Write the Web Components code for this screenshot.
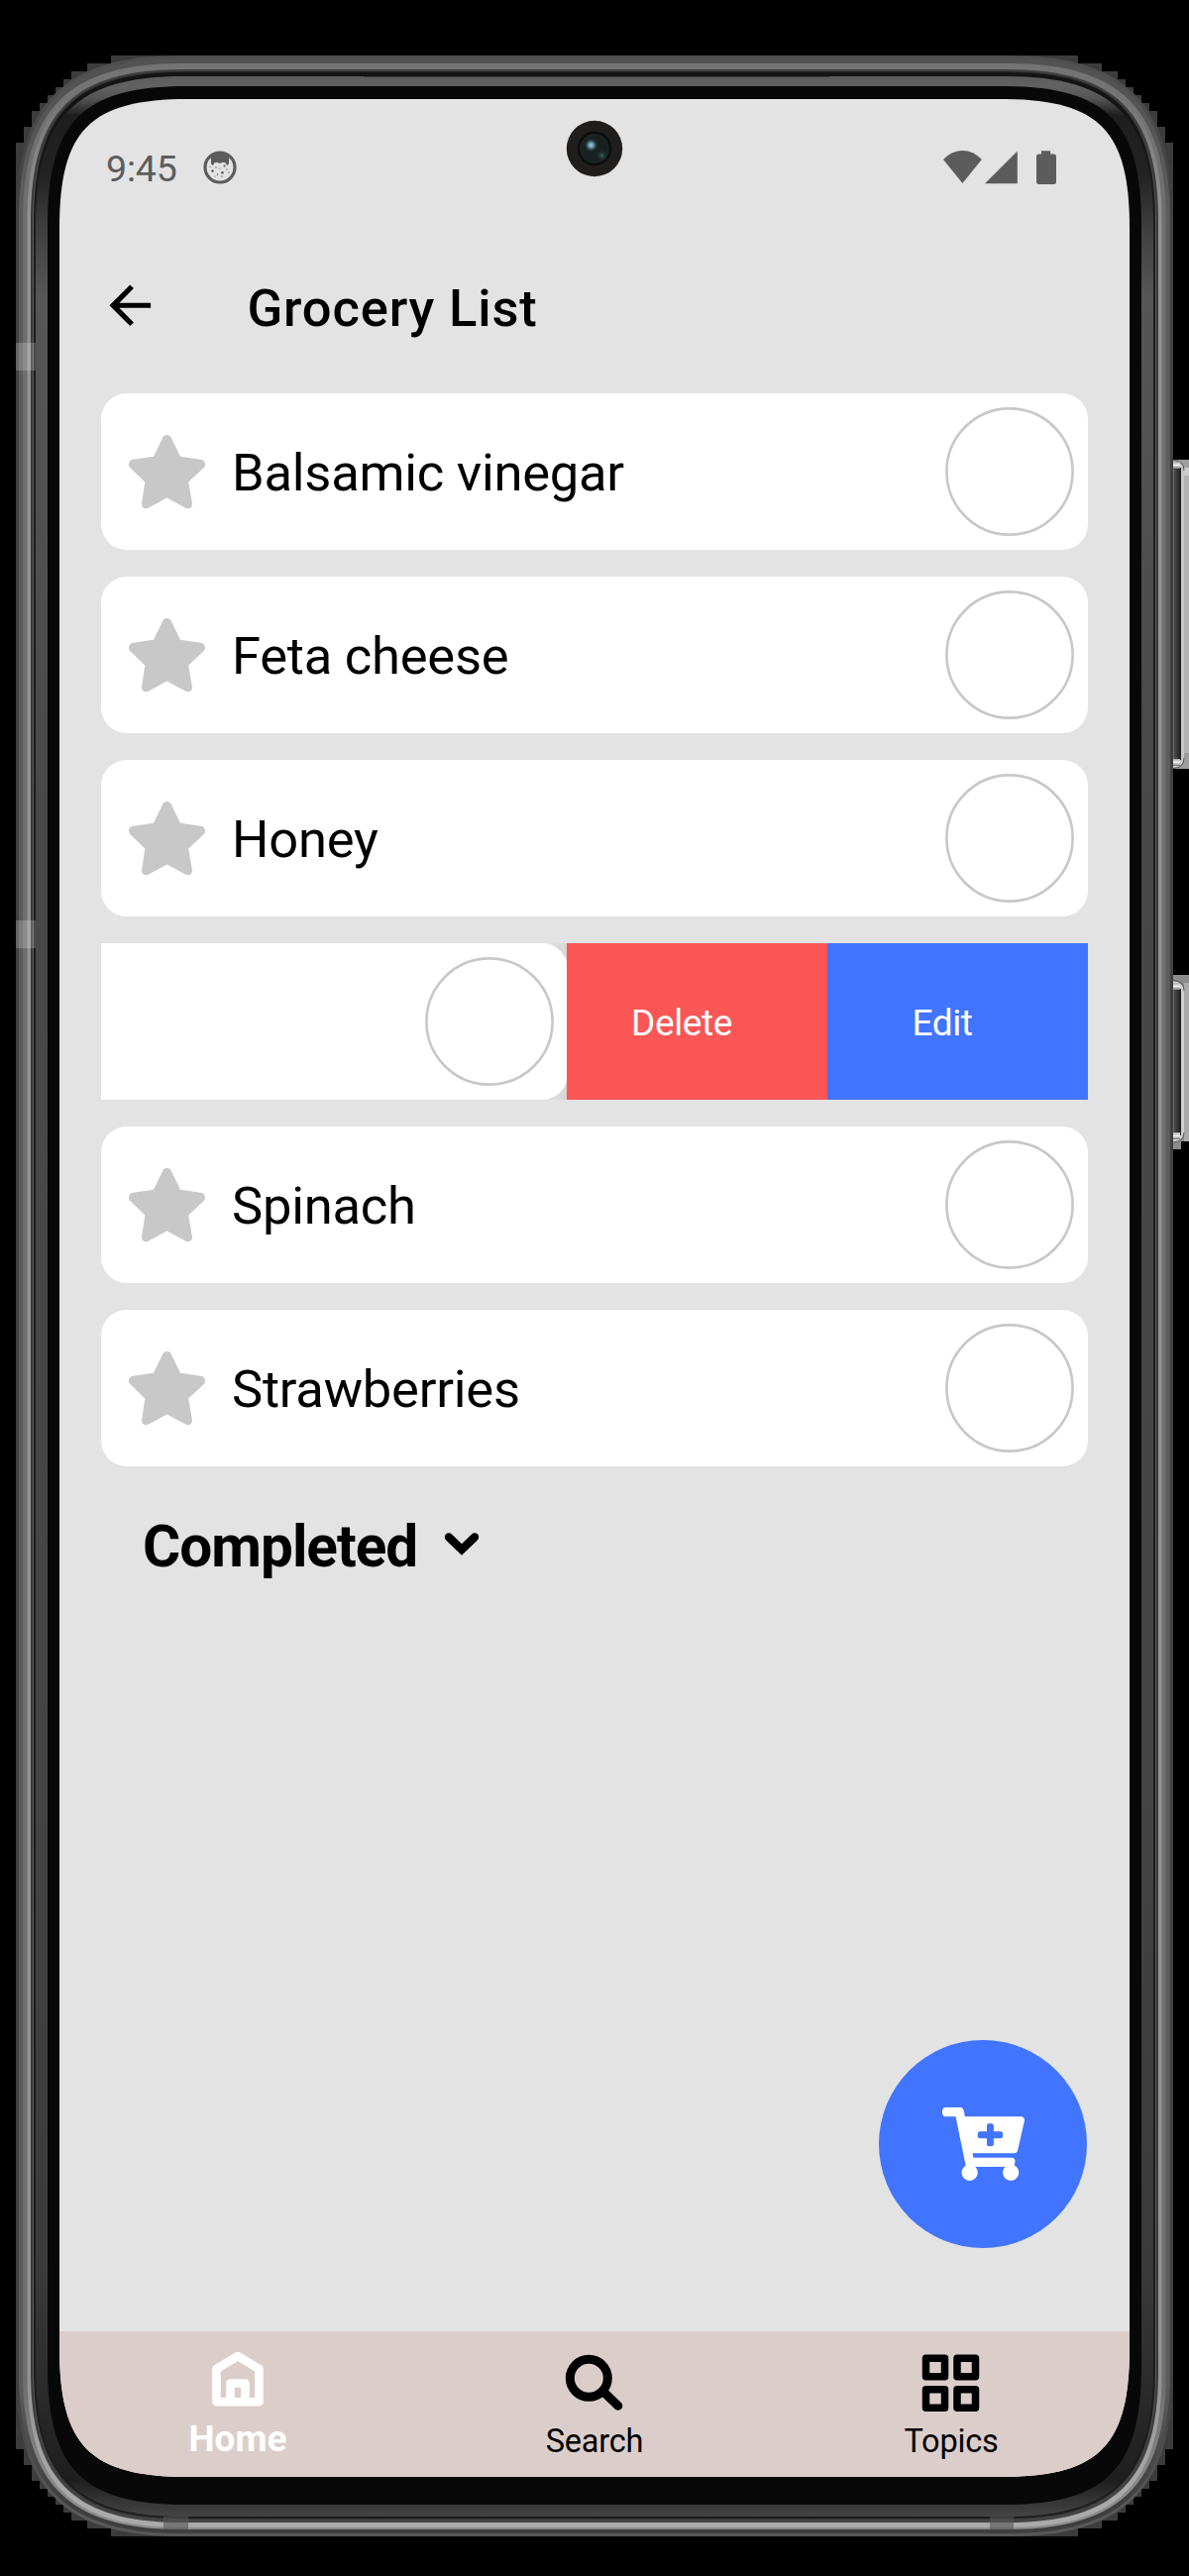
<!DOCTYPE html>
<html lang="en">
<head>
<meta charset="utf-8">
<title>Grocery List</title>
<style>
  html, body { margin: 0; background: #000; }
  body { width: 1200px; height: 2600px; overflow: hidden; font-family: Roboto, "Liberation Sans", sans-serif; color: #000; }
</style>
</head>
<body>
<phone-frame>
  <status-bar time="9:45"></status-bar>
  <app-header>Grocery List</app-header>
  <grocery-list>
    <grocery-item>Balsamic vinegar</grocery-item>
    <grocery-item>Feta cheese</grocery-item>
    <grocery-item>Honey</grocery-item>
    <swiped-item></swiped-item>
    <grocery-item>Spinach</grocery-item>
    <grocery-item>Strawberries</grocery-item>
  </grocery-list>
  <completed-toggle>Completed</completed-toggle>
  <add-button></add-button>
  <tab-bar>
    <tab-item active>
      <svg slot="icon" width="60" height="62" viewBox="0 0 60 62"><path d="M8.500 22 L30 9 L51.500 22 V55.300 H8.500 Z" fill="none" stroke="#fff" stroke-width="8.600" stroke-linejoin="round"/><path d="M22.500 54 V36.500 H37.500 V54" fill="none" stroke="#fff" stroke-width="8.600" stroke-linejoin="round"/></svg>
      Home</tab-item>
    <tab-item>
      <svg slot="icon" width="60" height="66" viewBox="0 -2 60 66"><circle cx="24.300" cy="29.300" r="19" fill="none" stroke="#000" stroke-width="9"/><path d="M38.500 42.500 L53.800 57.200" stroke="#000" stroke-width="9" stroke-linecap="round"/></svg>
      Search</tab-item>
    <tab-item>
      <svg slot="icon" width="60" height="66" viewBox="0 0 60 66"><g fill="none" stroke="#000" stroke-width="7.500" stroke-linejoin="round"><rect x="4.500" y="11.300" width="19" height="18.500"/><rect x="36" y="11.300" width="18.500" height="18.500"/><rect x="4.500" y="42.800" width="19" height="18.500"/><rect x="36" y="42.800" width="18.500" height="18.500"/></g></svg>
      Topics</tab-item>
  </tab-bar>
</phone-frame>

<script>
// Rounded outline with smoothed corners: R is the corner extent, a the control pull.
const outline = (l, t, r, b, R, a) =>
  `M${l} ${t + R}C${l} ${t + a} ${l + a} ${t} ${l + R} ${t}H${r - R}C${r - a} ${t} ${r} ${t + a} ${r} ${t + R}` +
  `V${b - R}C${r} ${b - a} ${r - a} ${b} ${r - R} ${b}H${l + R}C${l + a} ${b} ${l} ${b - a} ${l} ${b - R}Z`;

const SCREEN = outline(0, 0, 1080, 2400, 130, 31);

function frameArt() {
  // [left, top, bottom, side colour, top colour, bottom colour]
  const layers = [
    [16, 56, 2560, '#404040', '#4e4e4e', '#585858'],
    [19, 59, 2557, '#5c5c5c', '#535353', '#3e3e3e'],
    [23, 64, 2553, '#6e6e6e', '#747474', '#8c8c8c'],
    [27.500, 66, 2551, '#929292', '#747474', '#aaaaaa'],
    [31, 70, 2546, '#3a3a3a', '#404040', '#444444'],
    [33, 72, 2543, '#5a5a5a', '#2a2a2a', '#383838'],
    [34, 73, 2542, '#1c1c1c', '#141414', '#1c1c1c'],
    [36, 77, 2540, null],
    [48, 87, 2528, '#080808', '#080808', '#080808'],
  ];
  let defs = '', body = '';
  layers.forEach(([x, t, b, side, top, bot], i) => {
    const k = (x - 16) / 44, R = 165 - 35 * k, a = 49 - 18 * k;
    const stops = side
      ? [[0, top], [.012, top], [.06, side], [.94, side], [.988, bot], [1, bot]]
      : [[0, '#5c5c5c'], [.004, '#626262'], [.009, '#555'], [.016, '#1e1e1e'], [.04, '#222'], [.062, '#3e3e3e'], [.09, '#565656'],
         [.3, '#484848'], [.7, '#444'], [.9, '#3a3a3a'], [.95, '#2a2a2a'], [.985, '#1e1e1e'], [.994, '#363636'], [1, '#444']];
    defs += `<linearGradient id="g${i}" gradientUnits="userSpaceOnUse" x1="0" x2="0" y1="${t}" y2="${b}">` +
      stops.map(([o, c]) => `<stop offset="${o}" stop-color="${c}"/>`).join('') + '</linearGradient>';
    body += `<path d="${outline(x, t, 1200 - x, b, R, a)}" fill="url(#g${i})"/>`;
  });
  // Stepped silhouette behind the metal rim.
  const steps = [[16, 144], [24, 128], [32, 112], [40, 104], [48, 96], [56, 88], [64, 80], [72, 72], [88, 64], [112, 56]];
  const rects = steps.map(([x, y]) => `<rect x="${x}" y="${y}" width="${1200 - 2 * x}" height="${2616 - 2 * y}"/>`).join('');
  return `<svg width="1200" height="2600" viewBox="0 0 1200 2600"><defs>${defs}
    <linearGradient id="btn"><stop offset="0" stop-color="#8a8a8a"/><stop offset=".12" stop-color="#4c4c4c"/><stop offset=".6" stop-color="#333"/><stop offset="1" stop-color="#1c1c1c"/></linearGradient>
    <linearGradient id="cap" x1="0" x2="0" y1="0" y2="1"><stop offset="0" stop-color="#aaa"/><stop offset=".5" stop-color="#eee"/><stop offset="1" stop-color="#777"/></linearGradient></defs>
    <g fill="#3c3c3c" shape-rendering="crispEdges">${rects}</g>${body}
    <g fill="#fff" fill-opacity=".2"><rect x="16" y="346" width="20" height="28"/><rect x="16" y="929" width="20" height="28"/></g>
    <g fill="#555" fill-opacity=".6"><rect x="165" y="2540" width="25" height="13"/><rect x="999" y="2540" width="24" height="13"/></g>
    <path d="M365 75H840L837 77.500H368Z" fill="#141414"/>
    <rect x="1184" y="464" width="16" height="312" fill="#9d9d9d"/><rect x="1195" y="472" width="5" height="8" fill="#ccc"/><rect x="1195" y="480" width="5" height="280" fill="#b2b2b2"/>
    <path d="M1184 465Q1195 465 1195 477V763Q1195 775 1184 775Z" fill="#c8c8c8"/>
    <path d="M1184 464.500Q1195 465 1195 475" fill="none" stroke="#555"/><path d="M1195 765Q1195 775 1184 775.500" fill="none" stroke="#555"/>
    <rect x="1184" y="472" width="8" height="295" fill="url(#btn)"/>
    <rect x="1184" y="466" width="7" height="7" fill="url(#cap)"/><rect x="1184" y="766" width="7" height="7" fill="url(#cap)"/>
    <path d="M1184 984H1200V1152H1192V1160H1184Z" fill="#8c8c8c"/><rect x="1195" y="992" width="5" height="160" fill="#aaa"/>
    <path d="M1184 990Q1195 991 1195 1001V1143Q1195 1152 1184 1153Z" fill="#d0d0d0"/>
    <path d="M1184 989.500Q1195 990 1195 1000" fill="none" stroke="#555"/><path d="M1195 1143Q1195 1152 1184 1153" fill="none" stroke="#555"/>
    <rect x="1184" y="998" width="8" height="148" fill="url(#btn)"/>
    <rect x="1184" y="992" width="7" height="7" fill="url(#cap)"/><rect x="1184" y="1143" width="7" height="7" fill="url(#cap)"/>
  </svg>`;
}

function define(name, html) {
  customElements.define(name, class extends HTMLElement {
    constructor() {
      super();
      this.attachShadow({ mode: 'open' }).innerHTML = typeof html === 'function' ? html(this) : html;
    }
  });
}

define('phone-frame', () => `<style>
  :host { display: block; position: relative; width: 1200px; height: 2600px; box-sizing: border-box; padding: 100px 60px; background: #000; }
  .art { position: absolute; inset: 0; }
  .art svg { display: block; }
  .screen { position: relative; width: 1080px; height: 2400px; display: flex; flex-direction: column; background: #e3e3e3; clip-path: path("${SCREEN}"); }
  .camera { position: absolute; left: 511px; top: 21px; }
</style>
<div class="art">${frameArt()}</div>
<div class="screen"><slot></slot>
<svg class="camera" width="58" height="58" viewBox="-29 -29 58 58">
  <defs><radialGradient id="lens"><stop offset="0" stop-color="#9fd4e8"/><stop offset=".4" stop-color="#5d8c9c"/><stop offset="1" stop-color="#203030" stop-opacity="0"/></radialGradient>
  <radialGradient id="glow"><stop offset="0" stop-color="#3a6a5c"/><stop offset="1" stop-color="#203030" stop-opacity="0"/></radialGradient></defs>
  <circle r="28.200" fill="#201e1d"/><circle r="17.200" fill="#0c0c0c"/><circle r="15" fill="#1b2424"/><circle r="12.500" fill="#182020"/>
  <circle cx="-3.500" cy="-3.500" r="7" fill="url(#lens)"/><ellipse cx="7.500" cy="7" rx="5.500" ry="5.500" fill="url(#glow)"/>
</svg></div>`);

define('status-bar', `<style>
  :host { display: flex; align-items: center; height: 138px; box-sizing: border-box; padding: 0 74px 0 47px; color: #5c5c5c; font-size: 37.500px; flex: none; }
  .time { line-height: 44px; width: 98px; margin-top: 1px; letter-spacing: -.2px; }
  svg { display: block; }
  .right { margin-left: auto; }
</style>
<span class="time">9:45</span>
<svg width="34" height="34" viewBox="0 0 34 34"><circle cx="17" cy="17" r="15" fill="none" stroke="#5c5c5c" stroke-width="3.200"/>
<path d="M7.500 5.500Q17 -1.500 26.500 5.500L26 11Q26.500 14.500 24.500 14.800Q23 14.800 23 12.500L20 11.800Q17 13.500 14 11.800L11 12.500Q11 14.800 9.500 14.800Q7.500 14.500 8 11Z" fill="#5c5c5c"/>
<g fill="#5c5c5c"><circle cx="9.500" cy="20.500" r="1.300"/><circle cx="19.500" cy="22.200" r="1.300"/><circle cx="21.500" cy="15.500" r="1.100"/><circle cx="13" cy="17" r=".7"/><circle cx="17" cy="18" r=".6"/><circle cx="14.500" cy="24" r=".8"/><circle cx="24" cy="19" r=".7"/><circle cx="26" cy="22" r=".7"/><circle cx="19" cy="26" r=".7"/><circle cx="12" cy="26" r=".6"/><circle cx="7" cy="16.500" r=".6"/></g></svg>
<svg class="right" width="114" height="35" viewBox="0 0 114 35" fill="#5c5c5c"><path d="M0 9Q8.500 0 19.400 0T38.800 9L19.400 33Z"/><path d="M42 33.200H74.800V.5Z"/><path d="M99 .2H108.200V3.500H111.500Q114 3.500 114 6V31.500Q114 34 111.500 34H96.500Q94 34 94 31.500V6Q94 3.500 96.500 3.500H99Z"/></svg>`);

define('app-header', `<style>
  :host { display: flex; align-items: center; height: 144px; padding: 0 40px; flex: none; font-size: 52.500px; font-weight: 500; }
  svg { display: block; margin: -3px 87px 0 0; }
  .t { line-height: 62px; margin-top: 2px; letter-spacing: .85px; }
</style>
<svg width="62.500" height="62.500" viewBox="0 0 24 24"><path d="M20 11H7.830l5.590-5.590L12 4l-8 8 8 8 1.410-1.410L7.830 13H20v-2z"/></svg>
<span class="t"><slot></slot></span>`);

define('grocery-list', `<style>
  :host { display: flex; flex-direction: column; gap: 27px; padding: 15px 42px 0; flex: none; }
</style><slot></slot>`);

define('check-ring', `<style>
  :host { display: block; width: 130px; height: 130px; flex: none; }
  svg { display: block; }
</style><svg width="130" height="130" viewBox="0 0 130 130"><circle cx="65" cy="65" r="63.600" fill="none" stroke="#c8c8c8" stroke-width="2.600"/></svg>`);

define('grocery-item', `<style>
  :host { display: flex; align-items: center; height: 158px; box-sizing: border-box; padding: 0 14px 0 28px; background: #fff; border-radius: 26px; font-size: 52.500px; }
  svg { display: block; margin-right: 27px; }
  .name { flex: 1; line-height: 62px; margin-top: 2px; white-space: nowrap; letter-spacing: -.25px; }
</style>
<svg width="77" height="75" viewBox="0 0 77 75"><path fill="#c8c8c8" d="M38.500 0Q41.800 0 43 3.200L52 21.800L72.500 24.800Q77 25.500 77 30Q77 32 75.200 33.600L60.200 47.500L64 69.500Q63.800 74.500 59.200 74.300Q58 74 57 73.500L38.500 63.500L20 73.500Q19 74 17.800 74.300Q13.200 74.500 13 69.500L16.300 47.500L1.800 33.600Q0 32 0 30Q0 25.500 4.500 24.800L25 21.800L34 3.200Q35.200 0 38.500 0Z"/></svg>
<span class="name"><slot></slot></span><check-ring></check-ring>`);

define('swiped-item', `<style>
  :host { display: flex; height: 158px; font-size: 37px; letter-spacing: -.4px; color: #fff; }
  .card { width: 471px; box-sizing: border-box; padding: 14px; display: flex; justify-content: flex-end; background: #fff; border-radius: 0 26px 26px 0; }
  .notch { background: linear-gradient(90deg, #e3e3e3 95%, #d6d6d6); flex: none; width: 471px; margin-right: -1px; }
  .act { flex: 1; display: flex; align-items: center; justify-content: center; padding: 2px 31px 0 0; }
  .del { background: #fa5655; } .edit { background: #4175ff; }
</style>
<div class="notch"><div class="card"><check-ring></check-ring></div></div>
<div class="act del">Delete</div><div class="act edit">Edit</div>`);

define('completed-toggle', `<style>
  :host { display: flex; align-items: center; gap: 26px; flex: none; padding: 46px 84px 0; font-size: 58.500px; font-weight: 700; line-height: 70px; letter-spacing: -1px; }
  svg { display: block; }
</style><span><slot></slot></span>
<svg width="38" height="30" viewBox="0 0 38 30"><path d="M6 5.500L19 18L32 5.500" fill="none" stroke="#000" stroke-width="8.400" stroke-linecap="round"/></svg>`);

define('add-button', `<style>
  :host { display: flex; align-items: center; justify-content: center; width: 210px; height: 210px; flex: none; align-self: flex-end; margin: auto 43px 84px 0; border-radius: 50%; background: #4175ff; }
</style>
<svg width="83" height="74" viewBox="0 0 576 512"><path fill="#fff" d="M504.717 320H211.572l6.545 32h268.418c15.401 0 26.816 14.301 23.403 29.319l-5.517 24.276C523.112 414.668 536 433.828 536 456c0 31.202-25.519 56.444-56.824 55.994-29.823-.429-54.350-24.631-55.155-54.447-.44-16.287 6.085-31.049 16.803-41.548H231.176C241.553 426.165 248 440.326 248 456c0 31.813-26.528 57.431-58.670 55.938-28.540-1.325-51.751-24.385-53.251-52.917-1.158-22.034 10.436-41.455 28.051-51.586L93.883 64H24C10.745 64 0 53.255 0 40V24C0 10.745 10.745 0 24 0h102.529c11.401 0 21.228 8.021 23.513 19.190L159.208 64H551.990c15.401 0 26.816 14.301 23.403 29.319l-47.273 208C525.637 312.246 515.923 320 504.717 320zM408 168h-48v-40c0-8.837-7.163-16-16-16h-16c-8.837 0-16 7.163-16 16v40h-48c-8.837 0-16 7.163-16 16v16c0 8.837 7.163 16 16 16h48v40c0 8.837 7.163 16 16 16h16c8.837 0 16-7.163 16-16v-40h48c8.837 0 16-7.163 16-16v-16c0-8.837-7.163-16-16-16z"/></svg>`);

define('tab-bar', `<style>
  :host { display: flex; flex: none; height: 147px; background: #dbceca; }
</style><slot></slot>`);

define('tab-item', `<style>
  :host { display: flex; flex-direction: column; align-items: center; flex: 1; font-size: 32.500px; letter-spacing: -.2px; }
  :host([active]) { color: #fff; font-weight: 700; font-size: 37px; letter-spacing: 0; }
  .icon { height: 66px; padding-top: 16px; display: flex; justify-content: center; }
  .label { line-height: 38px; height: 38px; margin-top: 10px; }
  :host([active]) .label { margin-top: 8px; }
</style><div class="icon"><slot name="icon"></slot></div><div class="label"><slot></slot></div>`);
</script>
</body>
</html>
